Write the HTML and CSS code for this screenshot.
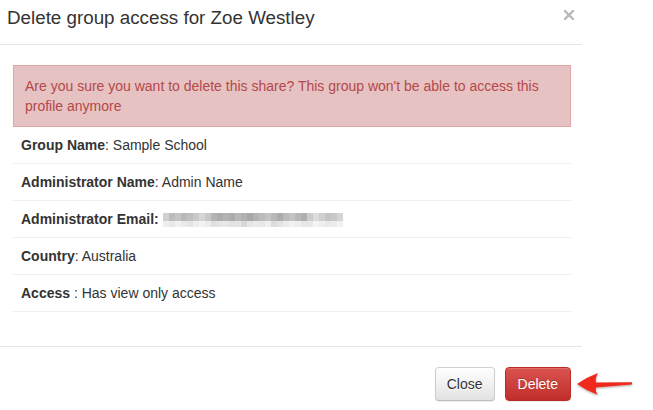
FILE: index.html
```html
<!DOCTYPE html>
<html>
<head>
<meta charset="utf-8">
<link rel="stylesheet" href="styles.css">
</head>
<body>
<div class="modal">
  <div class="modal-header">
    <h4 class="modal-title">Delete group access for Zoe Westley</h4>
    <svg class="close" width="10" height="10" viewBox="0 0 10 10"><path d="M1 1L9 9M9 1L1 9" stroke="#b9b9b9" stroke-width="2.4" stroke-linecap="square"/></svg>
  </div>
  <div class="modal-body">
    <div class="alert">Are you sure you want to delete this share? This group won't be able to access this profile anymore</div>
    <table class="details">
      <tr><td><b>Group Name</b>: Sample School</td></tr>
      <tr><td><b>Administrator Name</b>: Admin Name</td></tr>
      <tr><td><b>Administrator Email:</b> <svg class="blur" width="180" height="14" viewBox="0 0 180 14" shape-rendering="crispEdges">
        <g>
          <rect x="0" y="0" width="6" height="8" fill="#d0d0d0"/><rect x="6" y="0" width="6" height="8" fill="#bcbcbc"/><rect x="12" y="0" width="6" height="8" fill="#c4c4c4"/><rect x="18" y="0" width="6" height="8" fill="#b8b8b8"/><rect x="24" y="0" width="6" height="8" fill="#c0c0c0"/><rect x="30" y="0" width="6" height="8" fill="#c8c8c8"/><rect x="36" y="0" width="6" height="8" fill="#d6d6d6"/><rect x="42" y="0" width="6" height="8" fill="#c8c8c8"/><rect x="48" y="0" width="6" height="8" fill="#b4b4b4"/><rect x="54" y="0" width="6" height="8" fill="#acacac"/><rect x="60" y="0" width="6" height="8" fill="#b4b4b4"/><rect x="66" y="0" width="6" height="8" fill="#acacac"/><rect x="72" y="0" width="6" height="8" fill="#b8b8b8"/><rect x="78" y="0" width="6" height="8" fill="#b0b0b0"/><rect x="84" y="0" width="6" height="8" fill="#a8a8a8"/><rect x="90" y="0" width="6" height="8" fill="#b4b4b4"/><rect x="96" y="0" width="6" height="8" fill="#bcbcbc"/><rect x="102" y="0" width="6" height="8" fill="#c4c4c4"/><rect x="108" y="0" width="6" height="8" fill="#b8b8b8"/><rect x="114" y="0" width="6" height="8" fill="#acacac"/><rect x="120" y="0" width="6" height="8" fill="#bcbcbc"/><rect x="126" y="0" width="6" height="8" fill="#c4c4c4"/><rect x="132" y="0" width="6" height="8" fill="#b8b8b8"/><rect x="138" y="0" width="6" height="8" fill="#b0b0b0"/><rect x="144" y="0" width="6" height="8" fill="#cccccc"/><rect x="150" y="0" width="6" height="8" fill="#dcdcdc"/><rect x="156" y="0" width="6" height="8" fill="#d0d0d0"/><rect x="162" y="0" width="6" height="8" fill="#c4c4c4"/><rect x="168" y="0" width="6" height="8" fill="#c8c8c8"/><rect x="174" y="0" width="6" height="8" fill="#d4d4d4"/>
          <rect x="0" y="8" width="6" height="6" fill="#eeeeee"/><rect x="6" y="8" width="6" height="6" fill="#e8e8e8"/><rect x="12" y="8" width="6" height="6" fill="#f0f0f0"/><rect x="18" y="8" width="6" height="6" fill="#eaeaea"/><rect x="24" y="8" width="6" height="6" fill="#e4e4e4"/><rect x="30" y="8" width="6" height="6" fill="#eeeeee"/><rect x="36" y="8" width="6" height="6" fill="#f2f2f2"/><rect x="42" y="8" width="6" height="6" fill="#ececec"/><rect x="48" y="8" width="6" height="6" fill="#e0e0e0"/><rect x="54" y="8" width="6" height="6" fill="#e6e6e6"/><rect x="60" y="8" width="6" height="6" fill="#e8e8e8"/><rect x="66" y="8" width="6" height="6" fill="#e2e2e2"/><rect x="72" y="8" width="6" height="6" fill="#e4e4e4"/><rect x="78" y="8" width="6" height="6" fill="#d8d8d8"/><rect x="84" y="8" width="6" height="6" fill="#e6e6e6"/><rect x="90" y="8" width="6" height="6" fill="#eaeaea"/><rect x="96" y="8" width="6" height="6" fill="#e8e8e8"/><rect x="102" y="8" width="6" height="6" fill="#f0f0f0"/><rect x="108" y="8" width="6" height="6" fill="#dcdcdc"/><rect x="114" y="8" width="6" height="6" fill="#e4e4e4"/><rect x="120" y="8" width="6" height="6" fill="#ececec"/><rect x="126" y="8" width="6" height="6" fill="#f2f2f2"/><rect x="132" y="8" width="6" height="6" fill="#eeeeee"/><rect x="138" y="8" width="6" height="6" fill="#e6e6e6"/><rect x="144" y="8" width="6" height="6" fill="#e8e8e8"/><rect x="150" y="8" width="6" height="6" fill="#f4f4f4"/><rect x="156" y="8" width="6" height="6" fill="#eeeeee"/><rect x="162" y="8" width="6" height="6" fill="#eaeaea"/><rect x="168" y="8" width="6" height="6" fill="#ececec"/><rect x="174" y="8" width="6" height="6" fill="#f2f2f2"/>
        </g>
      </svg></td></tr>
      <tr><td><b>Country</b>: Australia</td></tr>
      <tr><td><b>Access</b> : Has view only access</td></tr>
    </table>
  </div>
  <div class="modal-footer">
    <button class="btn btn-default">Close</button>
    <button class="btn btn-danger">Delete</button>
  </div>
</div>
<svg class="arrow" width="70" height="40" viewBox="0 0 70 40">
  <defs>
    <filter id="sh" x="-20%" y="-30%" width="140%" height="160%">
      <feDropShadow dx="0" dy="1" stdDeviation="0.8" flood-color="#000" flood-opacity="0.35"/>
    </filter>
  </defs>
  <path d="M7,19 Q17,12 28,8 Q25,13 26,17.6 L62,17.2 L62,19.4 L26,22.4 Q25,26 28,30 Q17,26 7,19 Z" fill="#ef2a1f" filter="url(#sh)"/>
</svg>
</body>
</html>
```

FILE: styles.css
```css
html, body {
  margin: 0;
  padding: 0;
  background: #fff;
}
body {
  font-family: "Liberation Sans", Arial, Helvetica, sans-serif;
  font-size: 14px;
  line-height: 20px;
  color: #333;
  position: relative;
  width: 653px;
  height: 410px;
  overflow: hidden;
}
.modal {
  width: 582px;
  background: #fff;
}
.modal-header {
  display: flex;
  justify-content: space-between;
  align-items: flex-start;
  box-sizing: border-box;
  height: 45px;
  padding: 6px 8px 0 7px;
  border-bottom: 1px solid #e5e5e5;
}
.modal-title {
  margin: 0;
  font-size: 18.8px;
  line-height: 24px;
  font-weight: normal;
  color: #333;
}
.close {
  display: block;
  margin-top: 4px;
}
.modal-body {
  padding: 20px 11px 34px 13px;
}
.alert {
  background: #e6c2c2;
  border: 1px solid #dca7a7;
  color: #b5484a;
  padding: 10px 11px;
}
.details {
  width: 100%;
  border-collapse: collapse;
  border-spacing: 0;
}
.details td {
  padding: 8px;
  line-height: 20px;
  border-bottom: 1px solid #eeeeee;
  color: #333;
}
.details b {
  font-weight: bold;
}
.blur {
  display: inline-block;
  vertical-align: -3px;
}
.modal-footer {
  display: flex;
  justify-content: flex-end;
  gap: 10px;
  padding: 20px 11px 9px;
  border-top: 1px solid #e5e5e5;
}
.btn {
  font-family: "Liberation Sans", Arial, Helvetica, sans-serif;
  font-size: 14px;
  line-height: 20px;
  height: 34px;
  box-sizing: border-box;
  padding: 6px 11px;
  border-radius: 4px;
  border: 1px solid;
  margin: 0;
}
.btn-default {
  color: #333;
  background: linear-gradient(to bottom, #ffffff 0%, #e2e2e2 100%);
  border-color: #d0d0d0 #cccccc #bdbdbd;
  text-shadow: 0 1px 0 #fff;
  box-shadow: inset 0 1px 0 rgba(255,255,255,.15), 0 1px 1px rgba(0,0,0,.075);
}
.btn-danger {
  color: #fff;
  background: linear-gradient(to bottom, #d9534f 0%, #c12e2a 100%);
  border-color: #b92c28;
  text-shadow: 0 -1px 0 rgba(0,0,0,.2);
  box-shadow: inset 0 1px 0 rgba(255,255,255,.15), 0 1px 1px rgba(0,0,0,.075);
  padding: 6px 12px;
}
.arrow {
  position: absolute;
  left: 570px;
  top: 365px;
}
```
